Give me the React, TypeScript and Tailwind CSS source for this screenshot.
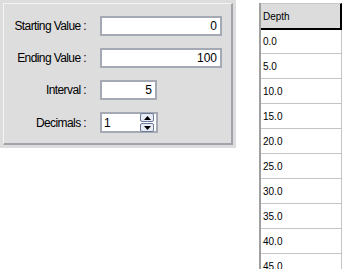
const rows = ["0.0", "5.0", "10.0", "15.0", "20.0", "25.0", "30.0", "35.0", "40.0", "45.0"];

const fields = [
  { label: "Starting Value :", value: "0", width: "w-[122px]" },
  { label: "Ending Value :", value: "100", width: "w-[122px]" },
  { label: "Interval :", value: "5", width: "w-[57px]" },
];

const Spinner = () => (
  <div className="flex flex-col gap-[1px] mr-[2px]">
    <div className="w-[14px] h-[9px] border border-[#6b7a99] rounded-[2px] bg-[#e8ecf4] flex items-center justify-center">
      <svg width="7" height="4" viewBox="0 0 7 4">
        <path d="M0 4 L3.5 0 L7 4 Z" fill="#000" />
      </svg>
    </div>
    <div className="w-[14px] h-[9px] border border-[#6b7a99] rounded-[2px] bg-[#e8ecf4] flex items-center justify-center">
      <svg width="7" height="4" viewBox="0 0 7 4">
        <path d="M0 0 L3.5 4 L7 0 Z" fill="#000" />
      </svg>
    </div>
  </div>
);

export default function App() {
  return (
    <div className="w-[348px] h-[269px] overflow-hidden bg-white flex items-start" style={{ fontFamily: '"Liberation Sans", Arial, sans-serif' }}>
      <div className="w-[236px] h-[148px] bg-[#dddddd] p-[3px]">
        <div className="h-[142px] border-t border-l border-t-[#f4f4f4] border-l-[#f4f4f4] border-r-2 border-b-2 border-r-[#a2a2aa] border-b-[#a2a2aa] pt-[12px] flex flex-col gap-[12px]">
          {fields.map((f) => (
            <div key={f.label} className="flex items-center">
              <div className="w-[82px] text-right text-[12px] tracking-[-0.6px] text-black">{f.label}</div>
              <div className={`ml-[14px] h-[20px] ${f.width} bg-white border-2 border-[#a5a9b4] flex items-center justify-end pr-[3px] text-[12px] text-black`}>
                {f.value}
              </div>
            </div>
          ))}
          <div className="flex items-center">
            <div className="w-[82px] text-right text-[12px] tracking-[-0.6px] text-black">Decimals :</div>
            <div className="ml-[14px] h-[21px] w-[58px] bg-white border-2 border-[#a5a9b4] flex items-center justify-between pl-[2px] text-[12px] text-black">
              <span>1</span>
              <Spinner />
            </div>
          </div>
        </div>
      </div>
      <div className="ml-[23px] mt-[3px] w-[83px] border-l-2 border-[#a0a0a0] text-[10px] text-black">
        <div className="h-[27px] bg-[#dcdcdc] border-t border-t-[#c8c8c8] border-b-2 border-b-black border-r-2 border-r-black flex items-center pl-[2px]">
          Depth
        </div>
        {rows.map((r, i) => (
          <div
            key={r}
            className={`${i === 0 ? "h-[24px]" : "h-[25px]"} border-b border-r border-[#c4c4c4] flex items-center pl-[2px]`}
          >
            {r}
          </div>
        ))}
      </div>
    </div>
  );
}
